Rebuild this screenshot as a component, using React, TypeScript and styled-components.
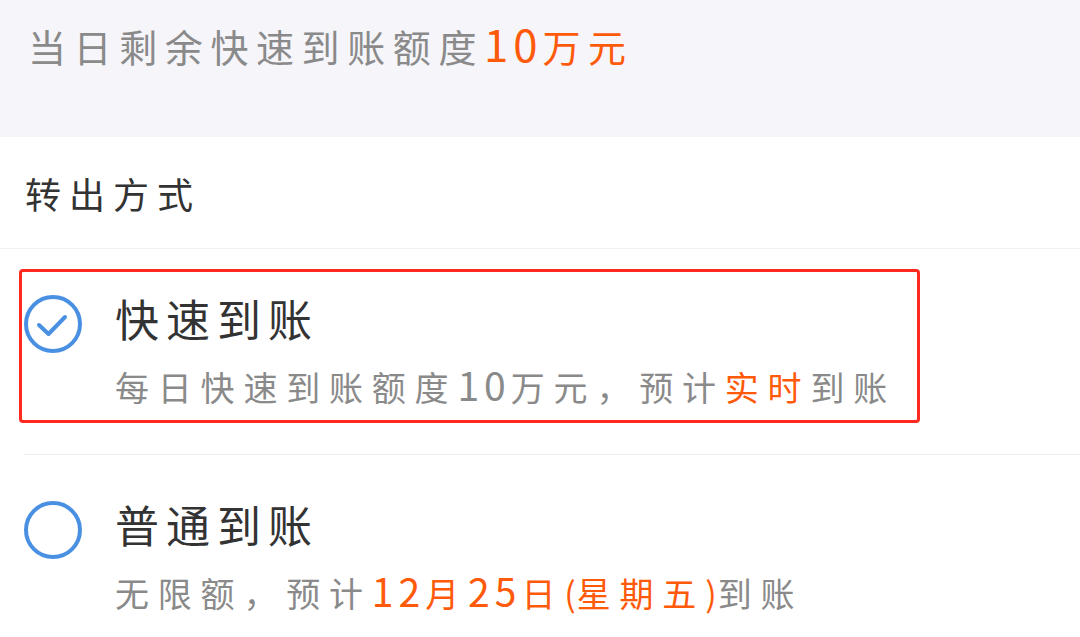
import styled, { createGlobalStyle } from 'styled-components';

const GlobalStyle = createGlobalStyle`
  html, body {
    margin: 0;
    padding: 0;
    background: #ffffff;
    font-family: "Noto Sans CJK SC", "Noto Sans", sans-serif;
  }
  * {
    box-sizing: border-box;
  }
`;

const ORANGE = '#ff5a0a';
const GREY = '#8a8a8a';
const DARK = '#333333';

const Page = styled.div`
  width: 1080px;
  height: 637px;
  overflow: hidden;
  background: #ffffff;
`;

const QuotaBand = styled.div`
  height: 137px;
  background: #f5f5fa;
  padding: 20px 0 0 28px;
  font-size: 38px;
  line-height: 52px;
  letter-spacing: 7.6px;
  color: ${GREY};
  white-space: nowrap;
`;

const Accent = styled.span`
  color: ${ORANGE};
`;

// digits and brackets sit tighter and a bit larger than the CJK text
const Num = styled.span`
  font-size: 1.15em;
  line-height: 0;
  letter-spacing: 5px;
`;

const Paren = styled.span`
  letter-spacing: 1px;
`;

const SectionHeader = styled.div`
  height: 112px;
  display: flex;
  align-items: center;
  padding-left: 25px;
  font-size: 36px;
  letter-spacing: 8px;
  color: ${DARK};
  border-bottom: 1px solid #f1f1f1;
`;

const OptionList = styled.div`
  display: flex;
  flex-direction: column;
`;

const Option = styled.div`
  position: relative;
  display: flex;
  align-items: flex-start;
  gap: 32px;
  margin-left: 24px;
  padding: 44px 0 45px 0;
  border-bottom: 1px solid #ececec;
`;

const RadioIcon = styled.svg`
  flex: none;
  width: 60px;
  height: 60px;
  margin-left: -1px;
  margin-top: 1px;
`;

const OptionBody = styled.div`
  display: flex;
  flex-direction: column;
  gap: 22px;
`;

const OptionTitle = styled.div`
  font-size: 44px;
  line-height: 50px;
  letter-spacing: 7px;
  color: ${DARK};
`;

const OptionDesc = styled.div`
  font-size: 34px;
  line-height: 44px;
  letter-spacing: 8.8px;
  color: ${GREY};
  white-space: nowrap;
`;

const Highlight = styled.div`
  position: absolute;
  left: -5px;
  top: 20px;
  width: 901px;
  height: 154px;
  border: 3px solid #ff2a1f;
  border-radius: 4px;
  pointer-events: none;
`;

function Radio({ checked }: { checked: boolean }) {
  return (
    <RadioIcon viewBox="0 0 60 60">
      <circle cx="30" cy="30" r="27" fill="none" stroke="#4a90e2" strokeWidth="4" />
      {checked && (
        <path
          d="M16 31 L25.5 40 L42 23"
          fill="none"
          stroke="#4a90e2"
          strokeWidth="4"
          strokeLinecap="round"
          strokeLinejoin="round"
        />
      )}
    </RadioIcon>
  );
}

function App() {
  return (
    <Page>
      <GlobalStyle />
      <QuotaBand>
        当日剩余快速到账额度
        <Accent>
          <Num>10</Num>万元
        </Accent>
      </QuotaBand>
      <SectionHeader>转出方式</SectionHeader>
      <OptionList>
        <Option>
          <Radio checked />
          <OptionBody>
            <OptionTitle>快速到账</OptionTitle>
            <OptionDesc>
              每日快速到账额度<Num>10</Num>万元，预计<Accent>实时</Accent>到账
            </OptionDesc>
          </OptionBody>
          <Highlight />
        </Option>
        <Option>
          <Radio checked={false} />
          <OptionBody>
            <OptionTitle>普通到账</OptionTitle>
            <OptionDesc>
              无限额，预计
              <Accent>
                <Num>12</Num>月<Num>25</Num>日<Paren>(</Paren>星期五<Paren>)</Paren>
              </Accent>
              到账
            </OptionDesc>
          </OptionBody>
        </Option>
      </OptionList>
    </Page>
  );
}

export default App;
